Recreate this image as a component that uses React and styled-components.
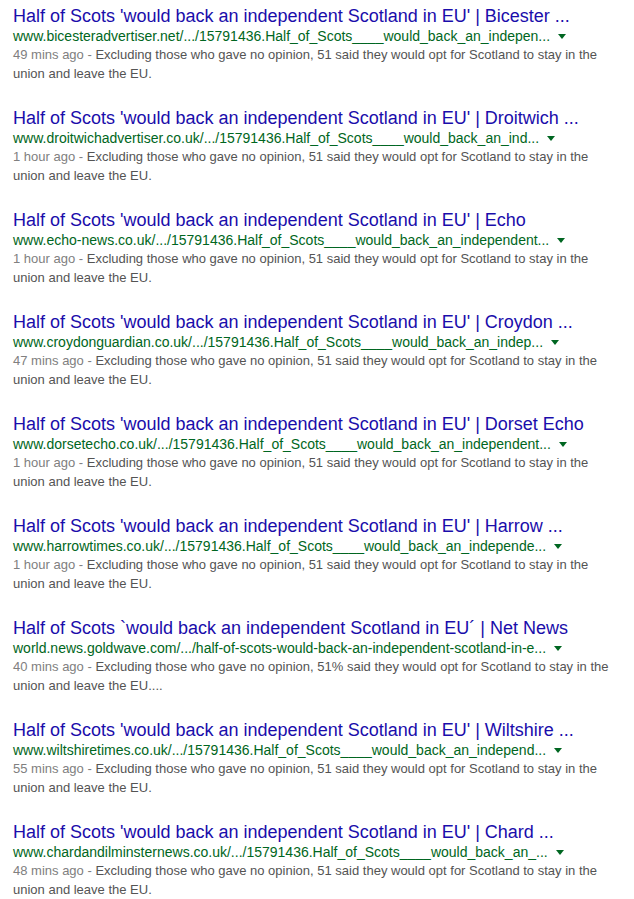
import React from "react";
import styled, { createGlobalStyle } from "styled-components";

const GlobalStyle = createGlobalStyle`
  html, body {
    margin: 0;
    padding: 0;
    background: #fff;
  }
  body {
    font-family: Arial, "Liberation Sans", sans-serif;
  }
`;

const Page = styled.div`
  padding: 5px 0 0 13px;
  width: 600px;
`;

const Result = styled.div`
  margin-bottom: 24px;
`;

const Title = styled.a`
  display: block;
  font-size: 18px;
  line-height: 22px;
  color: #1a0dab;
  text-decoration: none;
  white-space: nowrap;
`;

const UrlRow = styled.div`
  display: flex;
  align-items: center;
  height: 18px;
  font-size: 14px;
  line-height: 18px;
  color: #006621;
  white-space: nowrap;
`;

const Arrow = styled.span`
  display: inline-block;
  margin-left: 8px;
  margin-top: 1px;
  width: 0;
  height: 0;
  border-left: 4px solid transparent;
  border-right: 4px solid transparent;
  border-top: 5px solid #006621;
`;

const Snippet = styled.div`
  font-size: 13px;
  line-height: 19px;
  color: #545454;
`;

const Date = styled.span`
  color: #808080;
`;

const results = [
  { title: "Half of Scots 'would back an independent Scotland in EU' | Bicester ...", url: "www.bicesteradvertiser.net/.../15791436.Half_of_Scots____would_back_an_indepen...", date: "49 mins ago", pct: "51" },
  { title: "Half of Scots 'would back an independent Scotland in EU' | Droitwich ...", url: "www.droitwichadvertiser.co.uk/.../15791436.Half_of_Scots____would_back_an_ind...", date: "1 hour ago", pct: "51" },
  { title: "Half of Scots 'would back an independent Scotland in EU' | Echo", url: "www.echo-news.co.uk/.../15791436.Half_of_Scots____would_back_an_independent...", date: "1 hour ago", pct: "51" },
  { title: "Half of Scots 'would back an independent Scotland in EU' | Croydon ...", url: "www.croydonguardian.co.uk/.../15791436.Half_of_Scots____would_back_an_indep...", date: "47 mins ago", pct: "51" },
  { title: "Half of Scots 'would back an independent Scotland in EU' | Dorset Echo", url: "www.dorsetecho.co.uk/.../15791436.Half_of_Scots____would_back_an_independent...", date: "1 hour ago", pct: "51" },
  { title: "Half of Scots 'would back an independent Scotland in EU' | Harrow ...", url: "www.harrowtimes.co.uk/.../15791436.Half_of_Scots____would_back_an_independe...", date: "1 hour ago", pct: "51" },
  { title: "Half of Scots `would back an independent Scotland in EU´ | Net News", url: "world.news.goldwave.com/.../half-of-scots-would-back-an-independent-scotland-in-e...", date: "40 mins ago", pct: "51%", tail: "...." },
  { title: "Half of Scots 'would back an independent Scotland in EU' | Wiltshire ...", url: "www.wiltshiretimes.co.uk/.../15791436.Half_of_Scots____would_back_an_independ...", date: "55 mins ago", pct: "51" },
  { title: "Half of Scots 'would back an independent Scotland in EU' | Chard ...", url: "www.chardandilminsternews.co.uk/.../15791436.Half_of_Scots____would_back_an_...", date: "48 mins ago", pct: "51" },
];

export default function App() {
  return (
    <>
      <GlobalStyle />
      <Page>
        {results.map((r, i) => (
          <Result key={i}>
            <Title href="#">{r.title}</Title>
            <UrlRow>
              <span>{r.url}</span>
              <Arrow />
            </UrlRow>
            <Snippet>
              <Date>{r.date} - </Date>
              Excluding those who gave no opinion, {r.pct} said they would opt for Scotland to stay in the union and leave the EU{r.tail || "."}
            </Snippet>
          </Result>
        ))}
      </Page>
    </>
  );
}
